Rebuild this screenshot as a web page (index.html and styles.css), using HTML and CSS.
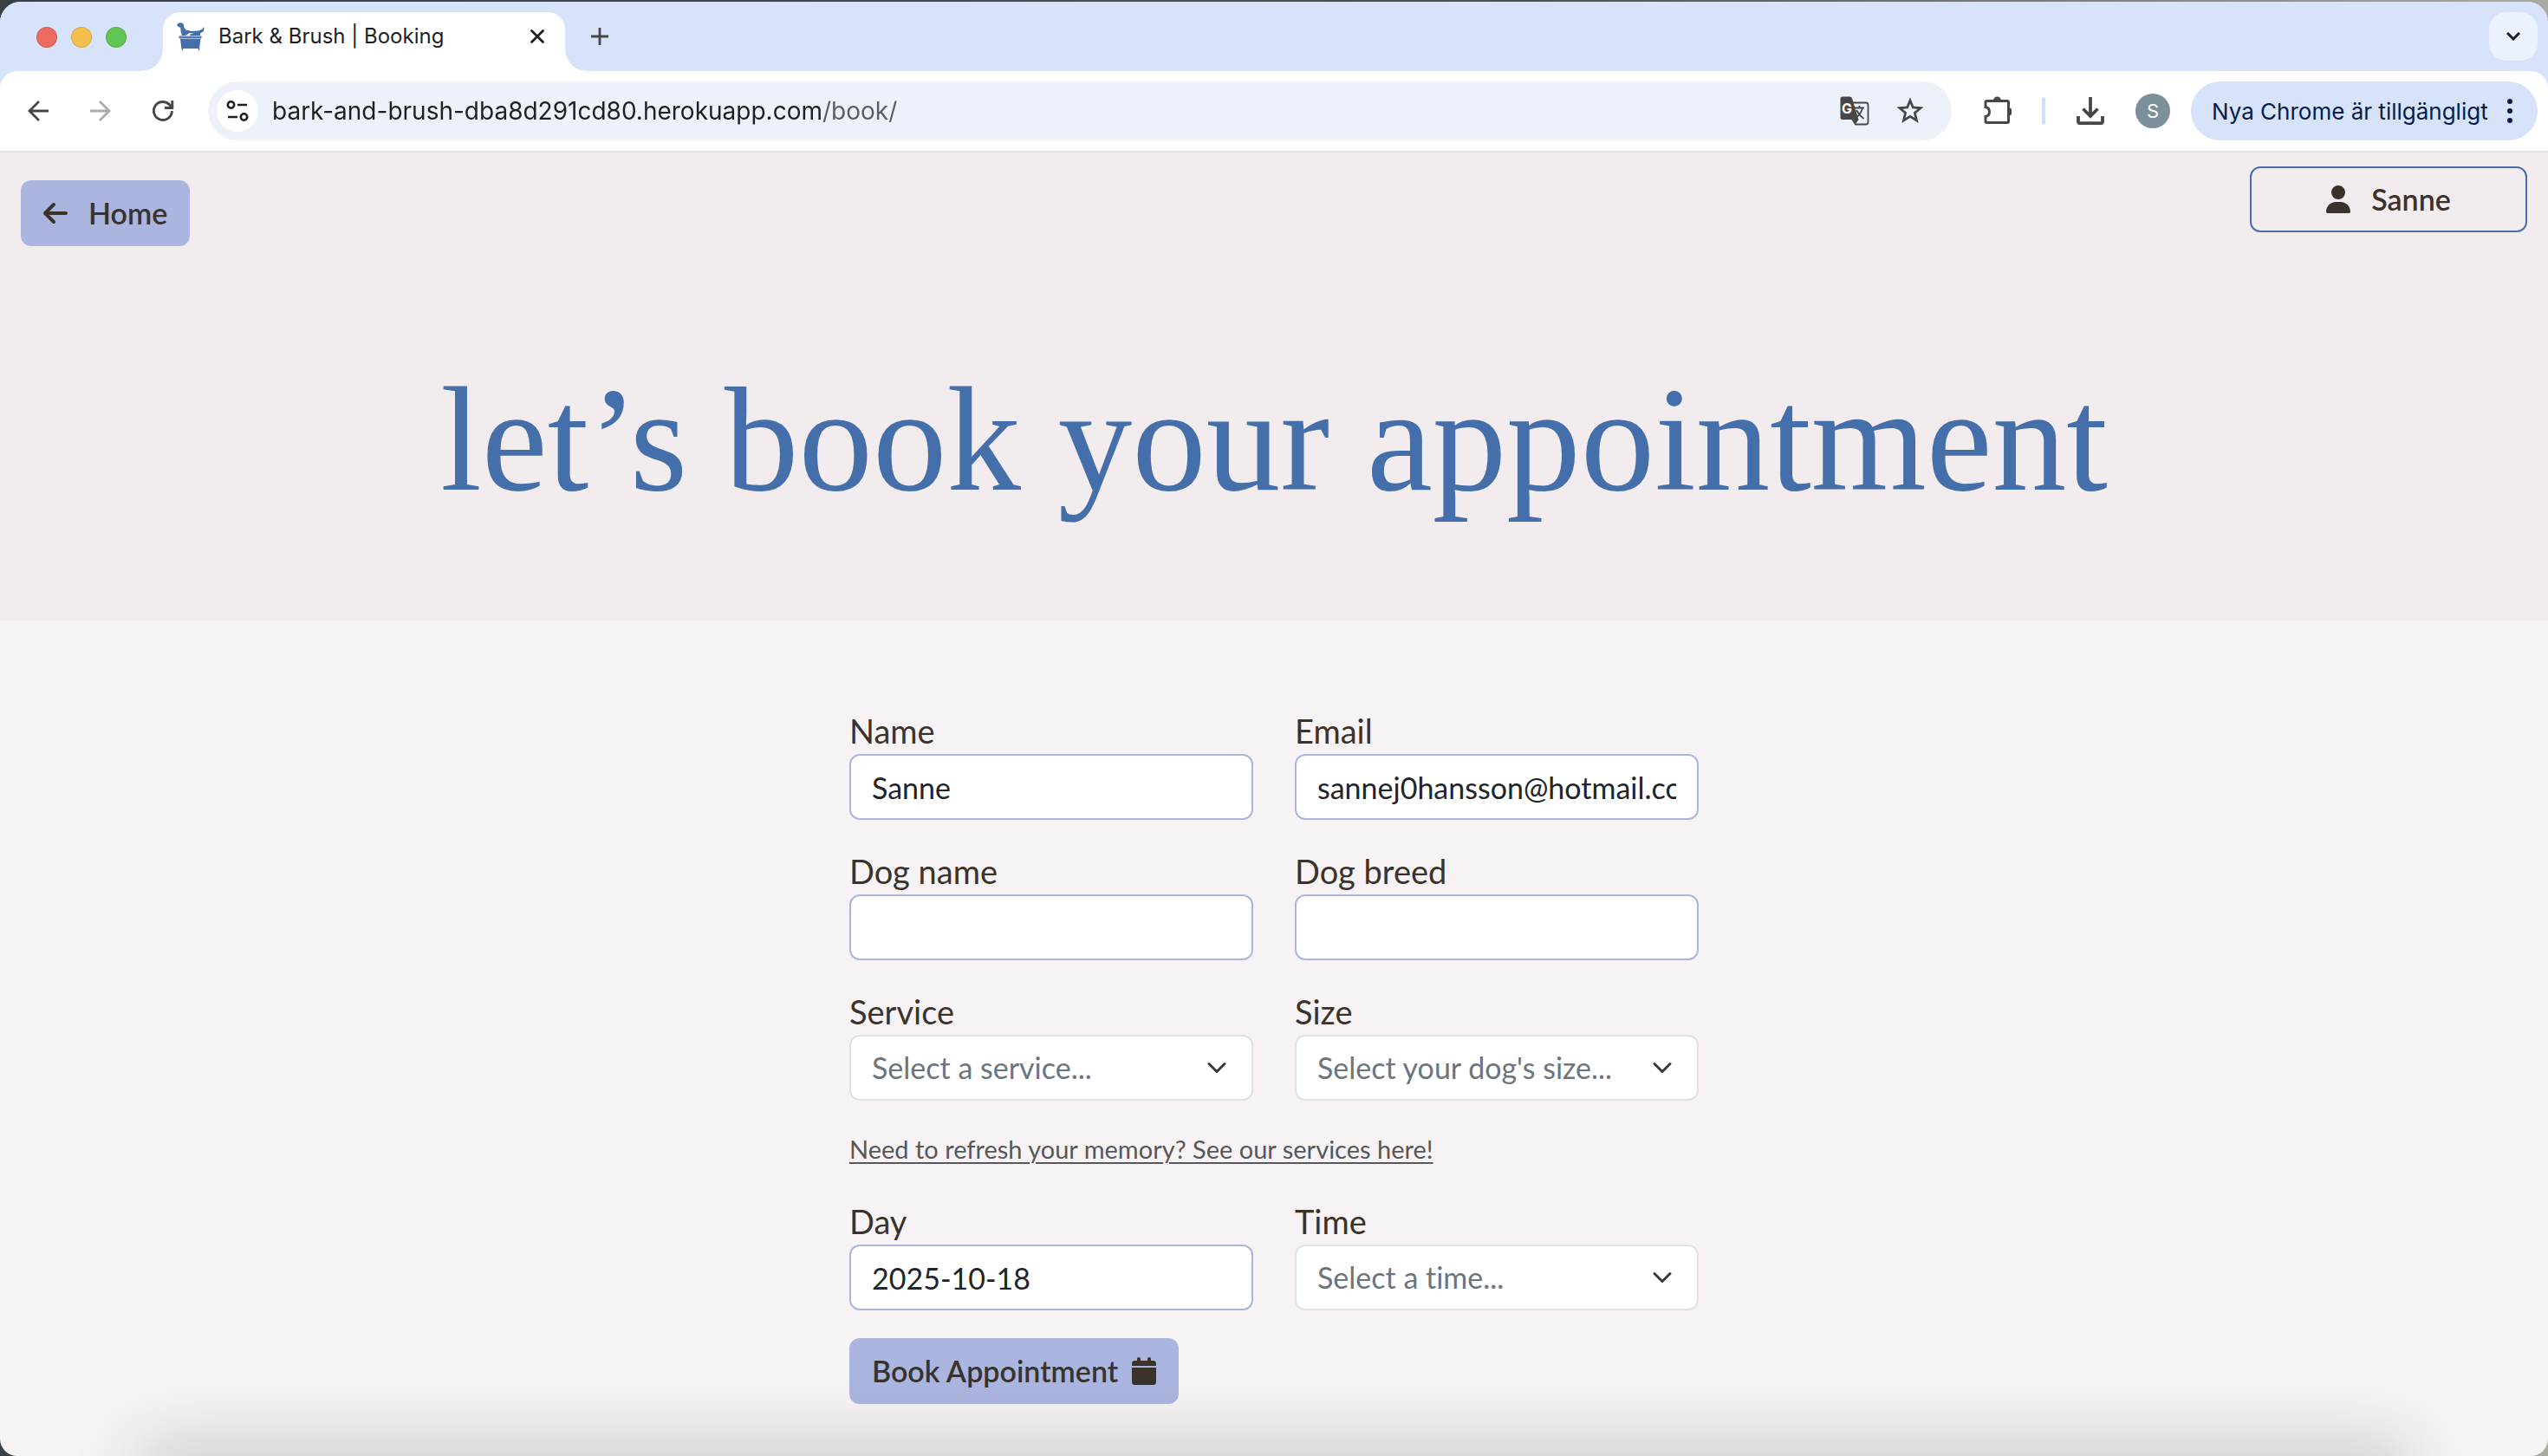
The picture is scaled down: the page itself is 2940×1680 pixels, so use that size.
FILE: index.html
```html
<!DOCTYPE html>
<html lang="en">
<head>
<meta charset="utf-8">
<meta name="viewport" content="width=device-width, initial-scale=1">
<title>Bark &amp; Brush | Booking</title>
<link rel="stylesheet" href="styles.css">
</head>
<body>
<div class="window">
  <div class="tabstrip">
    <div class="lights">
      <span class="light light-close"></span>
      <span class="light light-min"></span>
      <span class="light light-max"></span>
    </div>
    <div class="tab">
      <svg class="favicon" viewBox="0 0 32 32" aria-hidden="true">
        <path fill="#446fab" d="M0 3L1 1.500L3 0.300L6 0.300L8 2.500L8.500 6L10.500 8.500L17 10L25 9.500L29 8L31 5L31.500 7.500L30.500 10.500L27 12.500L27 15L16 15.500L15 13.500L20 12.500L15 12L10 15L6 15L4.500 10L4.300 5.500L2.500 5.500Z"/>
        <path fill="#446fab" d="M2.500 15.500H28.500V18H27.500L26 30H5.500L3.800 18H2.500Z"/>
        <path stroke="#a9c0df" stroke-width="1" d="M2.500 15.800H28.500M3.500 18.500H27.500"/>
        <path stroke="#446fab" stroke-width="1.500" d="M6.500 29V32M25.500 29V32"/>
      </svg>
      <span class="tab-title">Bark &amp; Brush | Booking</span>
      <button class="tab-close" type="button" aria-label="Close tab">
        <svg width="16" height="16" viewBox="0 0 16 16"><path d="M1.500 1.500L14.500 14.500M14.500 1.500L1.500 14.500" stroke="#1f1f1f" stroke-width="2.800" stroke-linecap="round"/></svg>
      </button>
    </div>
    <button class="new-tab" type="button" aria-label="New tab">
      <svg width="20" height="20" viewBox="0 0 20 20"><path d="M10 0V20M0 10H20" stroke="#474747" stroke-width="2.800"/></svg>
    </button>
    <button class="tab-search" type="button" aria-label="Search tabs">
      <svg width="16" height="10" viewBox="0 0 16 10"><path d="M1 1L8 8L15 1" fill="none" stroke="#1f1f1f" stroke-width="3"/></svg>
    </button>
  </div>

  <div class="toolbar">
    <div class="nav-buttons">
      <button class="icon-button" type="button" aria-label="Back">
        <svg width="24" height="24" viewBox="0 0 24 24"><path d="M24 12H2M13 1L2 12L13 23" fill="none" stroke="#474747" stroke-width="2.800"/></svg>
      </button>
      <button class="icon-button" type="button" aria-label="Forward" disabled>
        <svg width="24" height="24" viewBox="0 0 24 24"><path d="M0 12H22M11 1L22 12L11 23" fill="none" stroke="#acacac" stroke-width="2.800"/></svg>
      </button>
      <button class="icon-button" type="button" aria-label="Reload">
        <svg width="26" height="26" viewBox="0 0 26 26"><path d="M23.400 13A10.500 10.500 0 1 1 20.500 5.700L23 8.500M23.800 1V9.500H15" fill="none" stroke="#474747" stroke-width="2.900"/></svg>
      </button>
    </div>
    <div class="omnibox">
      <button class="site-info" type="button" aria-label="View site information">
        <svg width="26" height="26" viewBox="0 0 26 26" fill="none" stroke="#1f1f1f" stroke-width="2.600"><circle cx="5.500" cy="6" r="3.700"/><path d="M13 6H24M2 20H13"/><circle cx="20.500" cy="20" r="3.700"/></svg>
      </button>
      <input class="url" type="text" aria-label="Address" value="bark-and-brush-dba8d291cd80.herokuapp.com/book/">
      <button class="small-button" type="button" aria-label="Translate this page">
        <svg width="34" height="34" viewBox="0 0 34 34">
          <path d="M14 7.500H30Q32.500 7.500 32.500 10V30Q32.500 32.500 30 32.500H18L14 26" fill="#edf2fa" stroke="#474747" stroke-width="1.800"/>
          <path d="M3 0.500H11.500Q13.500 0.500 14.200 3L21.500 27L18 32L15.500 27H3Q0.500 27 0.500 24.500V3Q0.500 0.500 3 0.500Z" fill="#474747"/>
          <text x="2" y="20" class="icon-g">G</text>
          <path d="M17 13.500H28M22.500 11V14M26 14Q24 21 18.500 24.500M19 16Q22 22 27.500 26" fill="none" stroke="#474747" stroke-width="1.800"/>
        </svg>
      </button>
      <button class="small-button" type="button" aria-label="Bookmark this tab">
        <svg width="32" height="32" viewBox="0 0 32 32"><path d="M16 4L19.300 12L28 12.700L21.400 18.300L23.500 27L16 22.300L8.500 27L10.600 18.300L4 12.700L12.700 12Z" fill="none" stroke="#474747" stroke-width="2.800"/></svg>
      </button>
    </div>
    <div class="actions">
      <button class="icon-button" type="button" aria-label="Extensions">
        <svg width="34" height="34" viewBox="0 0 34 34"><path d="M5.500 5.500H29Q30.500 5.500 30.500 7V29Q30.500 30.500 29 30.500H5.500Q4 30.500 4 29V23.500Q8.500 22.500 8.500 18Q8.500 13.500 4 12.500V7Q4 5.500 5.500 5.500Z" fill="none" stroke="#474747" stroke-width="3"/><path d="M13 5A4.500 4.500 0 0 1 22 5ZM31 13.500A4.500 4.500 0 0 1 31 22.500Z" fill="#474747"/></svg>
      </button>
      <span class="divider"></span>
      <button class="icon-button" type="button" aria-label="Downloads">
        <svg width="32" height="32" viewBox="0 0 32 32"><path d="M16 0V22M7.500 13.500L16 22L24.500 13.500M2 22V28.500Q2 30.200 3.700 30.200H28.300Q30 30.200 30 28.500V22" fill="none" stroke="#474747" stroke-width="3.800"/></svg>
      </button>
      <button class="avatar" type="button" aria-label="Profile">S</button>
      <button class="update" type="button">Nya Chrome är tillgängligt
        <svg width="6" height="28" viewBox="0 0 6 28" fill="#041e49" aria-hidden="true"><circle cx="3" cy="3" r="3"/><circle cx="3" cy="14" r="3"/><circle cx="3" cy="25" r="3"/></svg>
      </button>
    </div>
  </div>

  <header class="hero">
    <nav class="site-nav">
      <a class="btn btn-primary btn-home" href="#home">
        <svg width="28" height="32" viewBox="0 0 448 512" fill="currentColor" aria-hidden="true"><path d="M9.400 233.400c-12.500 12.500-12.500 32.800 0 45.300l160 160c12.500 12.500 32.800 12.500 45.300 0s12.500-32.800 0-45.300L109.200 288 416 288c17.700 0 32-14.300 32-32s-14.300-32-32-32l-306.700 0L214.600 118.600c12.500-12.500 12.500-32.800 0-45.300s-32.800-12.500-45.300 0l-160 160z"/></svg>
        Home
      </a>
      <button class="btn btn-outline" type="button">
        <svg width="28" height="32" viewBox="0 0 448 512" fill="currentColor" aria-hidden="true"><path d="M224 256A128 128 0 1 0 224 0a128 128 0 1 0 0 256zm-45.700 48C79.800 304 0 383.800 0 482.300C0 498.700 13.300 512 29.700 512l388.600 0c16.400 0 29.700-13.300 29.700-29.700C448 383.800 368.200 304 269.700 304l-91.400 0z"/></svg>
        Sanne
      </button>
    </nav>
    <h1>let’s book your appointment</h1>
  </header>

  <main>
    <form class="booking">
      <div class="field">
        <label for="name">Name</label>
        <input class="control" id="name" type="text" value="Sanne">
      </div>
      <div class="field">
        <label for="email">Email</label>
        <input class="control" id="email" type="email" value="sannej0hansson@hotmail.com">
      </div>
      <div class="field">
        <label for="dog-name">Dog name</label>
        <input class="control" id="dog-name" type="text">
      </div>
      <div class="field">
        <label for="dog-breed">Dog breed</label>
        <input class="control" id="dog-breed" type="text">
      </div>
      <div class="field">
        <label for="service">Service</label>
        <div class="select-wrap">
          <select class="control" id="service"><option>Select a service...</option></select>
          <svg class="chevron" viewBox="0 0 16 16" aria-hidden="true"><path d="M2 5L8 11L14 5"/></svg>
        </div>
      </div>
      <div class="field">
        <label for="size">Size</label>
        <div class="select-wrap">
          <select class="control" id="size"><option>Select your dog's size...</option></select>
          <svg class="chevron" viewBox="0 0 16 16" aria-hidden="true"><path d="M2 5L8 11L14 5"/></svg>
        </div>
      </div>
      <p class="hint"><a href="#services">Need to refresh your memory? See our services here!</a></p>
      <div class="field">
        <label for="day">Day</label>
        <input class="control" id="day" type="text" value="2025-10-18">
      </div>
      <div class="field">
        <label for="time">Time</label>
        <div class="select-wrap">
          <select class="control" id="time"><option>Select a time...</option></select>
          <svg class="chevron" viewBox="0 0 16 16" aria-hidden="true"><path d="M2 5L8 11L14 5"/></svg>
        </div>
      </div>
      <button class="btn btn-primary btn-book" type="button">Book Appointment
        <svg width="28" height="32" viewBox="0 0 448 512" fill="currentColor" aria-hidden="true"><path d="M96 32l0 32L48 64C21.500 64 0 85.500 0 112l0 48 448 0 0-48c0-26.500-21.500-48-48-48l-48 0 0-32c0-17.700-14.300-32-32-32s-32 14.300-32 32l0 32L160 64l0-32c0-17.700-14.300-32-32-32S96 14.300 96 32zM448 192L0 192 0 464c0 26.500 21.500 48 48 48l352 0c26.500 0 48-21.500 48-48l0-272z"/></svg>
      </button>
    </form>
  </main>
</div>
</body>
</html>
```
FILE: styles.css
```css
*,
*::before,
*::after {
  box-sizing: border-box;
}

body {
  margin: 0;
  padding-top: 2px;
  background: linear-gradient(to right, #3a3f47, #4c524f 60%, #a9aaa0);
  color: #3b322c;
  font-family: Lato, "Open Sans", sans-serif;
  font-variant-ligatures: none;
}

button,
input,
select {
  font: inherit;
  color: inherit;
}

button {
  display: flex;
  align-items: center;
  justify-content: center;
  padding: 0;
  border: 0;
  background: none;
}

svg {
  display: block;
  flex: none;
}

.window {
  position: relative;
  min-height: calc(100vh - 2px);
  overflow: hidden;
  border-radius: 24px 24px 20px 20px;
  background: #f7f3f4;
}

/* soft shade cast over the lower edge */
.window::after {
  content: "";
  position: absolute;
  right: 170px;
  bottom: -40px;
  left: 170px;
  height: 40px;
  box-shadow: 0 0 80px 8px rgba(0, 0, 0, 0.22);
  pointer-events: none;
}

/* browser chrome */
.tabstrip,
.toolbar {
  font-family: Inter, "Liberation Sans", sans-serif;
}

.tabstrip {
  display: flex;
  align-items: flex-start;
  height: 100px;
  margin-bottom: -20px;
  padding: 12px 12px 0 42px;
  background: #d7e2fb;
}

.lights {
  display: flex;
  gap: 16px;
  width: 146px;
  padding-top: 17px;
}

.light {
  width: 24px;
  height: 24px;
  border: 1px solid rgba(0, 0, 0, 0.12);
  border-radius: 50%;
}

.light-close { background: #ed6a5e; }
.light-min { background: #f5bf4f; }
.light-max { background: #61c554; }

.tab {
  position: relative;
  display: flex;
  align-items: center;
  width: 464px;
  height: 68px;
  padding: 0 24px 12px 16px;
  border-radius: 20px 20px 0 0;
  background: #fff;
}

.tab::before,
.tab::after {
  content: "";
  position: absolute;
  bottom: 0;
  width: 24px;
  height: 24px;
}

.tab::before {
  right: 100%;
  background: radial-gradient(circle at 0 0, transparent 23px, #fff 24px);
}

.tab::after {
  left: 100%;
  background: radial-gradient(circle at 100% 0, transparent 23px, #fff 24px);
}

.favicon {
  width: 32px;
  height: 32px;
}

.tab-title {
  flex: 1;
  margin-left: 16px;
  color: #1f1f1f;
  font-size: 24px;
  line-height: 32px;
}

.new-tab {
  width: 56px;
  height: 56px;
  margin-left: 12px;
}

.tab-search {
  width: 56px;
  height: 56px;
  margin-left: auto;
  border-radius: 20px;
  background: #ebf2fd;
}

.toolbar {
  position: relative;
  display: flex;
  align-items: center;
  gap: 24px;
  height: 94px;
  padding: 0 12px 0 16px;
  border-bottom: 2px solid #e1e1e3;
  border-radius: 20px 20px 0 0;
  background: #fff;
}

.nav-buttons {
  display: flex;
  gap: 16px;
}

.icon-button {
  width: 56px;
  height: 56px;
}

.omnibox {
  display: flex;
  flex: 1;
  align-items: center;
  gap: 16px;
  height: 68px;
  padding: 0 24px 0 10px;
  border-radius: 34px;
  background: #edf2fa;
}

.site-info {
  width: 48px;
  height: 48px;
  border-radius: 50%;
  background: #fff;
}

/* the path part of the address is lighter than the host */
.url {
  flex: 1;
  min-width: 0;
  padding: 0;
  border: 0;
  outline: 0;
  background: linear-gradient(to right, #1f1f1f 636px, #5a5c5f 636px);
  background-clip: text;
  -webkit-background-clip: text;
  color: transparent;
  font-size: 28px;
  line-height: 40px;
}

.small-button {
  width: 48px;
  height: 48px;
}

.icon-g {
  fill: #fff;
  font-size: 16px;
  font-weight: 700;
}

.actions {
  display: flex;
  align-items: center;
  gap: 24px;
}

.divider {
  width: 4px;
  height: 32px;
  border-radius: 2px;
  background: #d3e0fb;
}

.avatar {
  width: 40px;
  height: 40px;
  border-radius: 50%;
  background: #7c909c;
  color: #fff;
  font-size: 22px;
}

.update {
  justify-content: space-between;
  width: 400px;
  height: 68px;
  padding: 0 29px 0 24px;
  border-radius: 34px;
  background: #d7e2fb;
  color: #041e49;
  font-size: 26px;
  white-space: nowrap;
}

/* page */
.hero {
  padding: 16px 24px 108px;
  background: #f3ecee;
}

.site-nav {
  display: flex;
  align-items: flex-start;
  justify-content: space-between;
}

.btn {
  display: flex;
  align-items: center;
  justify-content: center;
  gap: 24px;
  height: 76px;
  padding: 0 24px;
  border: 2px solid transparent;
  border-radius: 12px;
  color: #3b322c;
  font-size: 34px;
  font-weight: 600;
  line-height: 48px;
  text-decoration: none;
  white-space: nowrap;
}

.btn-primary {
  border-color: #aab6e0;
  background: #aab6e0;
}

.btn-home {
  margin-top: 16px;
}

.btn-outline {
  width: 320px;
  border-color: #446fab;
}

h1 {
  margin: 124px 0 0;
  color: #446fab;
  font-family: "Liberation Serif", serif;
  font-size: 171px;
  font-weight: 400;
  line-height: 200px;
  text-align: center;
}

.booking {
  display: grid;
  grid-template-columns: 1fr 1fr;
  gap: 32px 48px;
  max-width: 980px;
  margin: 0 auto;
  padding: 100px 0 60px;
}

.field label {
  display: block;
  font-size: 38px;
  line-height: 54px;
}

.control {
  display: block;
  width: 100%;
  height: 76px;
  padding: 0 24px;
  border: 2px solid #aab6e0;
  border-radius: 12px;
  background: #fff;
  color: #212529;
  font-size: 34px;
  line-height: 48px;
}

.select-wrap {
  position: relative;
}

select.control {
  appearance: none;
  border-color: #dee2e6;
  color: #6c757d;
}

.chevron {
  position: absolute;
  top: 26px;
  right: 30px;
  width: 24px;
  height: 24px;
  fill: none;
  stroke: #343a40;
  stroke-linecap: round;
  stroke-linejoin: round;
  stroke-width: 2;
  pointer-events: none;
}

.hint {
  grid-column: 1 / -1;
  margin: 0;
  font-size: 29px;
  line-height: 48px;
}

.hint a {
  color: #56575a;
  text-decoration-thickness: 2px;
  text-underline-offset: 4px;
}

.btn-book {
  justify-self: start;
  gap: 16px;
}
```
